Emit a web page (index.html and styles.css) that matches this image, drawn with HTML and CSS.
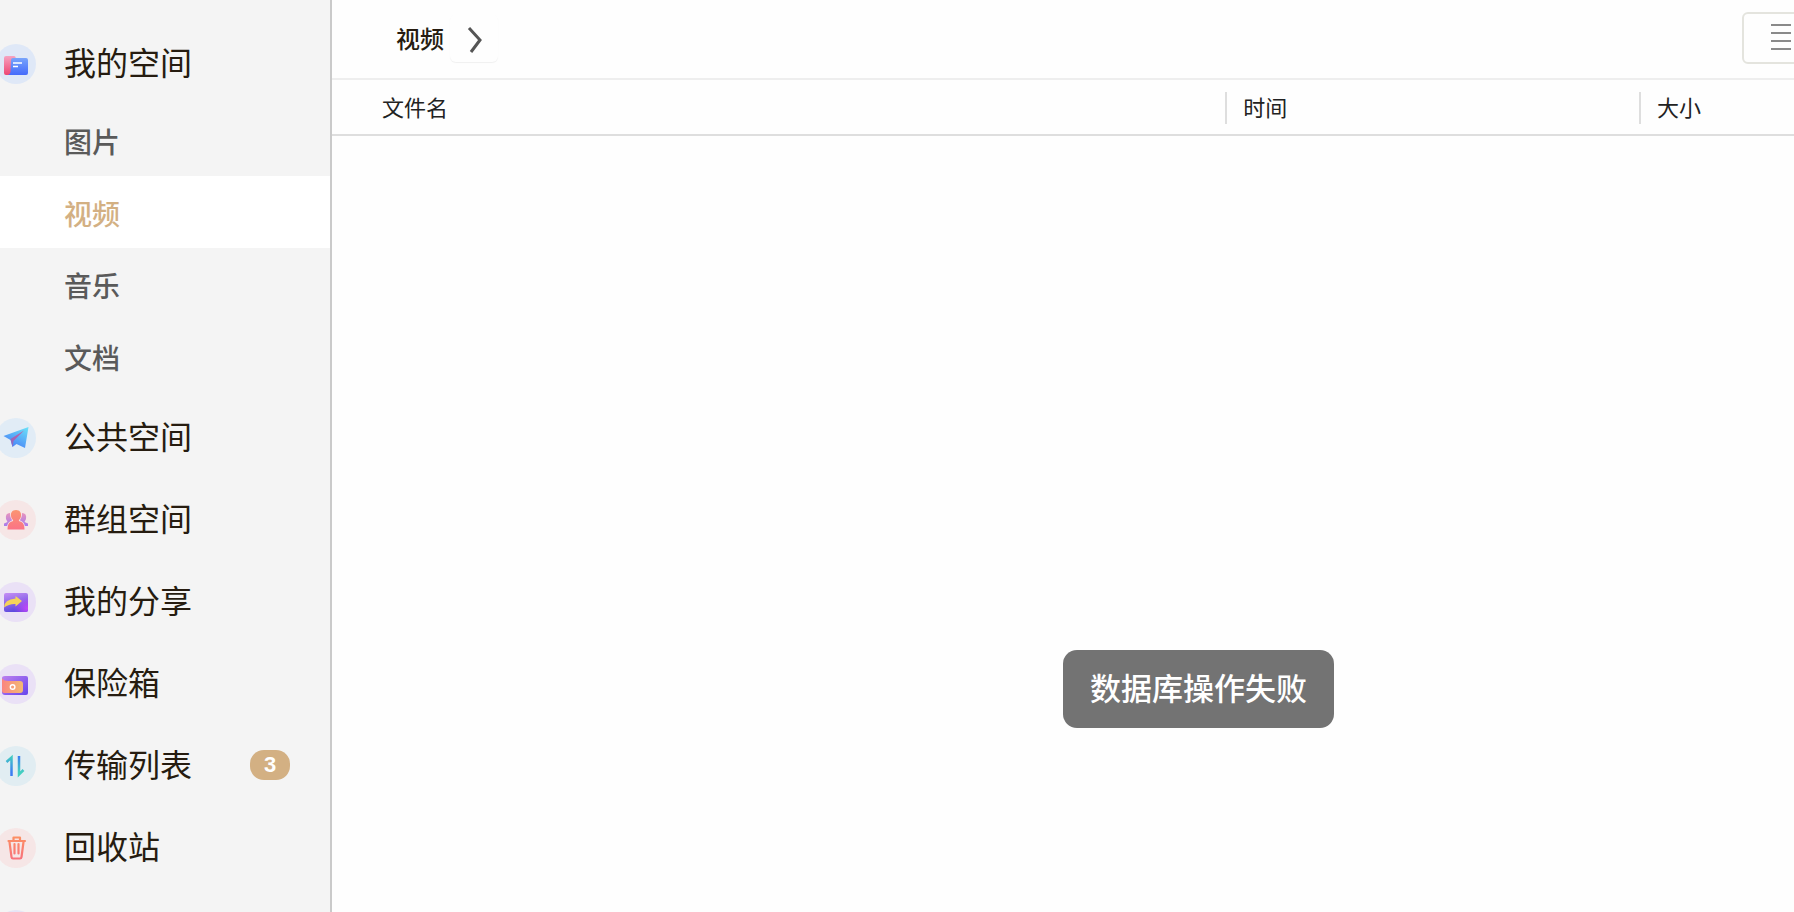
FILE: index.html
```html
<!DOCTYPE html>
<html lang="zh-CN">
<head>
<meta charset="utf-8">
<title>视频</title>
<link rel="stylesheet" href="styles.css">
</head>
<body>
<div class="app">
  <nav class="sidebar">
    <a class="item item-open" href="#">
      <svg class="icon" viewBox="0 0 40 40" aria-hidden="true">
        <defs>
          <linearGradient id="pink" x1="0" y1="0" x2="0" y2="1"><stop offset="0" stop-color="#f6a3c0"/><stop offset="1" stop-color="#ee4673"/></linearGradient>
          <linearGradient id="blue" x1="0" y1="0" x2="0" y2="1"><stop offset="0" stop-color="#78a4fb"/><stop offset="1" stop-color="#456bfb"/></linearGradient>
        </defs>
        <circle cx="20" cy="20" r="20" fill="#dfe8f7"/>
        <path d="M10 12h8q1.500 0 1.800 2H27v17H10q-2 0-2-2V14q0-2 2-2z" fill="url(#pink)"/>
        <path d="M17 14h13q2 0 2 2v13q0 2-2 2H12q2-.5 2.500-3L15 16q.2-2 2-2z" fill="url(#blue)"/>
        <path d="M17 19h9M17 22.500h5" stroke="#fff" stroke-width="1.500"/>
      </svg>
      <span class="label">我的空间</span>
    </a>
    <div class="sub">
      <a class="subitem" href="#">图片</a>
      <a class="subitem subitem-active" href="#" aria-current="page">视频</a>
      <a class="subitem" href="#">音乐</a>
      <a class="subitem" href="#">文档</a>
    </div>
    <a class="item" href="#">
      <svg class="icon" viewBox="0 0 40 40" aria-hidden="true">
        <defs>
          <linearGradient id="plane" x1="1" y1="0" x2=".4" y2="1"><stop offset="0" stop-color="#6be3f8"/><stop offset="1" stop-color="#4a83f7"/></linearGradient>
          <linearGradient id="fold" x1="1" y1="0" x2="0" y2="1"><stop offset="0" stop-color="#c8609f"/><stop offset="1" stop-color="#8a68c4"/></linearGradient>
        </defs>
        <circle cx="20" cy="20" r="20" fill="#e1ecf6"/>
        <path d="M32.500 9 7.500 18l7 4 2 7 4-3 8.500 4z" fill="url(#plane)"/>
        <path d="M28 12.500 14.500 21l2 8 1-6z" fill="url(#fold)"/>
      </svg>
      <span class="label">公共空间</span>
    </a>
    <a class="item" href="#">
      <svg class="icon" viewBox="0 0 40 40" aria-hidden="true">
        <defs>
          <linearGradient id="person" x1="0" y1="0" x2="0" y2="1"><stop offset="0" stop-color="#fb9571"/><stop offset="1" stop-color="#fb7386"/></linearGradient>
          <linearGradient id="side" x1="0" y1="0" x2="0" y2="1"><stop offset="0" stop-color="#e893bd"/><stop offset="1" stop-color="#a97bed"/></linearGradient>
        </defs>
        <circle cx="20" cy="20" r="20" fill="#f6e6e6"/>
        <path d="M14 13q-5 0-4 6l1.500 3L8 23.500V26h5l3-6zM26 13q5 0 4 6l-1.500 3 3.500 1.500V26h-5l-3-6z" fill="url(#side)"/>
        <path d="M20 10c-4 0-5.500 3-5 6 .2 2 1 3 2.200 4.200q0 1-2.200 1.500c-2.500 1-3.500 3.500-3.500 7.800h17c0-4.300-1-6.800-3.500-7.800q-2.200-.5-2.200-1.500C24 19 24.800 18 25 16c.5-3-1-6-5-6z" fill="url(#person)" stroke="#f6e6e6" stroke-width="1.500" paint-order="stroke"/>
      </svg>
      <span class="label">群组空间</span>
    </a>
    <a class="item" href="#">
      <svg class="icon" viewBox="0 0 40 40" aria-hidden="true">
        <defs>
          <linearGradient id="card" x1=".2" y1="0" x2=".5" y2="1"><stop offset="0" stop-color="#c18bf4"/><stop offset="1" stop-color="#5946dd"/></linearGradient>
          <radialGradient id="glow" cx="1" cy=".8" r=".6"><stop offset="0" stop-color="#c546fa"/><stop offset="1" stop-color="#c546fa" stop-opacity="0"/></radialGradient>
        </defs>
        <circle cx="20" cy="20" r="20" fill="#eae1f6"/>
        <rect x="8" y="11" width="24" height="19" rx="2" fill="url(#card)"/>
        <rect x="8" y="11" width="24" height="19" rx="2" fill="url(#glow)"/>
        <path d="M8 25.500q0-8 11.500-9v-2.500l6.500 5-6.500 5.500v-2.500q-6-.5-11.500 3.500z" fill="#f5d45a"/>
      </svg>
      <span class="label">我的分享</span>
    </a>
    <a class="item" href="#">
      <svg class="icon" viewBox="0 0 40 40" aria-hidden="true">
        <defs>
          <linearGradient id="safe" x1="0" y1="0" x2="1" y2="1"><stop offset="0" stop-color="#bd80ee"/><stop offset="1" stop-color="#6644ed"/></linearGradient>
          <linearGradient id="purse" x1="0" y1="0" x2="1" y2="0"><stop offset="0" stop-color="#fb857f"/><stop offset="1" stop-color="#f3ba73"/></linearGradient>
        </defs>
        <circle cx="20" cy="20" r="20" fill="#eae1f6"/>
        <path d="M9 12h21q2 0 2 2v15q0 2-2 2H9q-3 0-3-3V14q0-2 3-2z" fill="url(#safe)"/>
        <path d="M6 14.500q2 2.500 6 2.500h12q3 0 3 3v6q0 3-3 3H8q-2 0-2-2V14.500z" fill="url(#purse)"/>
        <circle cx="16.600" cy="23" r="2.300" fill="none" stroke="#fff" stroke-width="1.400"/>
      </svg>
      <span class="label">保险箱</span>
    </a>
    <a class="item" href="#">
      <svg class="icon" viewBox="0 0 40 40" aria-hidden="true">
        <defs>
          <linearGradient id="up" gradientUnits="userSpaceOnUse" x1="0" y1="10" x2="0" y2="30"><stop offset="0" stop-color="#43cfc0"/><stop offset=".8" stop-color="#3b7df3"/></linearGradient>
          <linearGradient id="down" gradientUnits="userSpaceOnUse" x1="0" y1="10" x2="0" y2="30"><stop offset="0" stop-color="#3b7df3"/><stop offset=".8" stop-color="#43cfc0"/></linearGradient>
        </defs>
        <circle cx="20" cy="20" r="20" fill="#e1edf2"/>
        <path d="M10.500 16 15.500 11.500V30" fill="none" stroke="url(#up)" stroke-width="2.500"/>
        <path d="M23 10v18.500L27.500 24" fill="none" stroke="url(#down)" stroke-width="2.500"/>
      </svg>
      <span class="label">传输列表</span>
      <span class="badge">3</span>
    </a>
    <a class="item" href="#">
      <svg class="icon" viewBox="0 0 40 40" aria-hidden="true">
        <defs>
          <linearGradient id="bin" gradientUnits="userSpaceOnUse" x1="0" y1="8" x2="0" y2="32"><stop offset="0" stop-color="#fc9163"/><stop offset="1" stop-color="#f8707c"/></linearGradient>
        </defs>
        <circle cx="20" cy="20" r="20" fill="#f6e6e6"/>
        <path d="M12.500 13h16.500M17.500 12.500V9.500h6.500V12.500M13.500 14l2 15q.2 1.500 1.500 1.500h7q1.300 0 1.500-1.500l2-15M18.500 16v9.500M22.500 16v9.500" fill="none" stroke="url(#bin)" stroke-width="2.200" stroke-linecap="round" stroke-linejoin="round"/>
      </svg>
      <span class="label">回收站</span>
    </a>
    <a class="item" href="#">
      <svg class="icon" viewBox="0 0 40 40" aria-hidden="true"><circle cx="20" cy="20" r="20" fill="#e6e5f6"/></svg>
    </a>
  </nav>
  <main class="content">
    <header class="toolbar">
      <span class="crumb">视频</span>
      <button class="next" type="button" aria-label="展开">
        <svg class="chevron" viewBox="0 0 16 28" aria-hidden="true"><path d="M2 2l11 12L4 26" fill="none" stroke="#555" stroke-width="3"/></svg>
      </button>
      <button class="view" type="button" aria-label="列表">
        <svg class="lines" viewBox="0 0 20 26" aria-hidden="true"><path d="M0 1h20M0 9h20M0 17h20M0 25h20" stroke="#8a8a8a" stroke-width="2"/></svg>
      </button>
    </header>
    <table class="files">
      <thead>
        <tr>
          <th class="col-name" scope="col"><span class="head">文件名</span></th>
          <th class="col-time" scope="col"><span class="head split">时间</span></th>
          <th scope="col"><span class="head split">大小</span></th>
        </tr>
      </thead>
    </table>
  </main>
  <div class="toast" role="alert">数据库操作失败</div>
</div>
</body>
</html>
```
FILE: styles.css
```css
* {
  box-sizing: border-box;
}

body {
  margin: 0;
  background: #fefefe;
  color: #222;
  font-family: "Noto Sans CJK SC", sans-serif;
  font-weight: 500;
}

.app {
  position: relative;
  display: flex;
  height: 100vh;
  overflow: hidden;
}

.sidebar {
  flex: 0 0 332px;
  padding-top: 28px;
  overflow: hidden;
  background: #f4f4f4;
  border-right: 2px solid #cacaca;
}

.item {
  display: flex;
  align-items: center;
  height: 72px;
  margin-bottom: 10px;
  padding-right: 40px;
  color: #261c10;
  font-size: 32px;
  font-weight: 400;
  line-height: 48px;
  text-decoration: none;
}

.item-open {
  margin-bottom: 4px;
}

.icon {
  flex: none;
  width: 40px;
  height: 40px;
  margin-left: -4px;
}

.label {
  margin-left: 28px;
  padding-bottom: 6px;
}

.badge {
  min-width: 40px;
  margin-bottom: 2px;
  margin-left: auto;
  border-radius: 14px;
  background: #d3b083;
  color: #fff;
  font-family: "Liberation Sans", sans-serif;
  font-size: 22px;
  font-weight: bold;
  line-height: 30px;
  text-align: center;
}

.sub {
  margin-bottom: 10px;
}

.subitem {
  display: flex;
  align-items: center;
  height: 72px;
  padding-top: 2px;
  padding-left: 64px;
  color: #5a5a5a;
  font-size: 28px;
  line-height: 40px;
  text-decoration: none;
}

.subitem-active {
  background: #fff;
  color: #d3b083;
}

.content {
  flex: 1;
  min-width: 0;
}

.toolbar {
  display: flex;
  align-items: center;
  height: 80px;
  padding-bottom: 2px;
  padding-left: 64px;
  overflow: hidden;
  border-bottom: 2px solid #eee;
}

.crumb {
  color: #261c10;
  font-size: 24px;
  line-height: 36px;
}

.next {
  display: flex;
  align-items: center;
  justify-content: center;
  width: 48px;
  height: 48px;
  margin-left: 6px;
  padding: 4px 0 0 2px;
  border: 0;
  border-radius: 6px;
  background: #fefefe;
  box-shadow: 0 1px 1px #f0f0f0;
}

.chevron {
  width: 16px;
  height: 28px;
}

.view {
  display: flex;
  flex: none;
  align-items: center;
  justify-content: center;
  width: 78px;
  height: 52px;
  margin-right: -26px;
  margin-left: auto;
  padding: 0 0 2px;
  border: 2px solid #e4e4de;
  border-radius: 6px;
  background: #fefefe;
}

.lines {
  width: 20px;
  height: 26px;
}

.files {
  width: 100%;
  table-layout: fixed;
  border-collapse: collapse;
  border-bottom: 2px solid #dedede;
}

.files th {
  padding: 12px 0 10px;
  font-size: 22px;
  font-weight: 400;
  line-height: 28px;
  text-align: left;
}

.files .col-name {
  width: 61.1%;
  padding-left: 50px;
}

.col-time {
  width: 28.3%;
}

.head {
  display: block;
  padding-bottom: 4px;
}

.split {
  padding-left: 16px;
  border-left: 2px solid #dedede;
}

.toast {
  position: absolute;
  top: 650px;
  left: 1063px;
  padding: 14px 27px 18px;
  border-radius: 14px;
  background: #737373;
  color: #fff;
  font-size: 31px;
  line-height: 46px;
}
```
